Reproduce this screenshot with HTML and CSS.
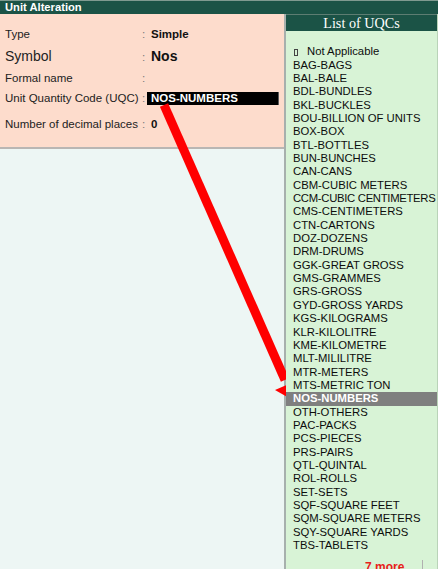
FILE: index.html
```html
<!DOCTYPE html>
<html lang="en">
<head>
<meta charset="utf-8">
<title>Unit Alteration</title>
<link rel="stylesheet" href="styles.css">
</head>
<body>
<div class="screen">
  <div class="topbar">Unit Alteration</div>
  <div class="content">
    <div class="main">
      <div class="panel">
        <div class="row r1"><span class="label">Type</span><span class="colon">:</span><span class="value">Simple</span></div>
        <div class="row r2"><span class="label big">Symbol</span><span class="colon">:</span><span class="value big">Nos</span></div>
        <div class="row r3"><span class="label">Formal name</span><span class="colon">:</span><span class="value"></span></div>
        <div class="row r4"><span class="label">Unit Quantity Code (UQC)</span><span class="colon">:</span><span class="value"><span class="field">NOS-NUMBERS</span></span></div>
        <div class="row r5"><span class="label">Number of decimal places</span><span class="colon">:</span><span class="value">0</span></div>
      </div>
    </div>
    <div class="side">
      <div class="side-title">List of UQCs</div>
      <ul class="uqc-list">
        <li><span class="na-box"></span>Not Applicable</li>
        <li>BAG-BAGS</li>
        <li>BAL-BALE</li>
        <li>BDL-BUNDLES</li>
        <li>BKL-BUCKLES</li>
        <li>BOU-BILLION OF UNITS</li>
        <li>BOX-BOX</li>
        <li>BTL-BOTTLES</li>
        <li>BUN-BUNCHES</li>
        <li>CAN-CANS</li>
        <li>CBM-CUBIC METERS</li>
        <li class="tight">CCM-CUBIC CENTIMETERS</li>
        <li>CMS-CENTIMETERS</li>
        <li>CTN-CARTONS</li>
        <li>DOZ-DOZENS</li>
        <li>DRM-DRUMS</li>
        <li>GGK-GREAT GROSS</li>
        <li>GMS-GRAMMES</li>
        <li>GRS-GROSS</li>
        <li>GYD-GROSS YARDS</li>
        <li>KGS-KILOGRAMS</li>
        <li>KLR-KILOLITRE</li>
        <li>KME-KILOMETRE</li>
        <li>MLT-MILILITRE</li>
        <li>MTR-METERS</li>
        <li>MTS-METRIC TON</li>
        <li class="selected">NOS-NUMBERS</li>
        <li>OTH-OTHERS</li>
        <li>PAC-PACKS</li>
        <li>PCS-PIECES</li>
        <li>PRS-PAIRS</li>
        <li>QTL-QUINTAL</li>
        <li>ROL-ROLLS</li>
        <li>SET-SETS</li>
        <li>SQF-SQUARE FEET</li>
        <li>SQM-SQUARE METERS</li>
        <li>SQY-SQUARE YARDS</li>
        <li>TBS-TABLETS</li>
      </ul>
      <div class="more"><span class="more-text">7 more ...</span><span class="more-bar"></span></div>
    </div>
  </div>
  <svg class="arrow" width="286" height="569" viewBox="0 0 286 569" xmlns="http://www.w3.org/2000/svg">
    <line x1="164" y1="105" x2="285" y2="380" stroke="#ff0000" stroke-width="9"/>
    <polygon points="275,390 298,380 295,401.5" fill="#ff0000"/>
  </svg>
</div>
</body>
</html>
```

FILE: styles.css
```css
* { box-sizing: border-box; }

html, body {
  margin: 0;
  padding: 0;
}

body {
  font-family: "Liberation Sans", Arial, sans-serif;
  color: #1a1a1a;
  background: #edf6f4;
}

.screen {
  position: relative;
  width: 438px;
  height: 569px;
  overflow: hidden;
  display: flex;
  flex-direction: column;
}

.topbar {
  height: 14px;
  border-top: 1px solid #7f9a90;
  background: #1b5346;
  color: #ffffff;
  font-weight: bold;
  font-size: 11.2px;
  line-height: 12px;
  padding-left: 5px;
  flex: none;
}

.content {
  flex: 1;
  display: flex;
  min-height: 0;
}

.main {
  width: 284px;
  flex: none;
  background: #edf6f4;
}

.panel {
  background: #fddccc;
  border-bottom: 2px solid #b9b6b3;
  padding: 12px 0 6px 5px;
}

.row {
  display: flex;
  align-items: baseline;
  font-size: 11.5px;
}

.r1 { height: 16px; line-height: 16px; }
.r2 { height: 28px; line-height: 28px; }
.r3 { height: 16px; line-height: 16px; }
.r4 { height: 18px; line-height: 18px; margin-top: 3px; }
.r5 { height: 34px; line-height: 34px; }

.label {
  width: 137px;
  flex: none;
  white-space: nowrap;
  color: #222222;
}

.colon {
  width: 9px;
  flex: none;
  color: #7a7a7a;
}

.value {
  font-weight: bold;
  color: #111111;
  white-space: nowrap;
}

.big { font-size: 14px; }

.field {
  display: inline-block;
  width: 132px;
  height: 13px;
  line-height: 13px;
  margin-left: -4px;
  padding-left: 4px;
  background: #000000;
  color: #ffffff;
  border-right: 1px solid #5a5a5a;
}

.side {
  flex: 1;
  display: flex;
  flex-direction: column;
  border-left: 2px solid #a7b0ad;
  background: #d8f3d6;
  border-right: 1px solid #b9d3b8;
}

.side-title {
  height: 17px;
  border-top: 1px solid #5d7d72;
  background: #1b5346;
  color: #ffffff;
  font-family: "Liberation Serif", "Times New Roman", serif;
  font-size: 14.2px;
  line-height: 16px;
  text-align: center;
  flex: none;
}

.uqc-list {
  list-style: none;
  margin: 0;
  padding: 14.3px 0 0 0;
  font-size: 11.3px;
  line-height: 13.35px;
  color: #0d0d0d;
}

.uqc-list li {
  padding-left: 7px;
  white-space: nowrap;
  height: 13.35px;
}

.uqc-list li.tight {
  letter-spacing: -0.3px;
}

.uqc-list li.selected {
  background: #7f7f7f;
  color: #ffffff;
  font-weight: bold;
}

.na-box {
  display: inline-block;
  width: 4px;
  height: 7px;
  border: 1px solid #444444;
  margin: 0 9px 0 1px;
  vertical-align: -1px;
}

.more {
  display: flex;
  align-items: flex-start;
  margin-top: 8px;
  padding-left: 79px;
  font-size: 12px;
  line-height: 14px;
}

.more-text {
  color: #e8211b;
  font-weight: bold;
}

.more-bar {
  width: 1px;
  height: 14px;
  background: #b0b0b0;
  margin-left: 4px;
}

.arrow {
  position: absolute;
  left: 0;
  top: 0;
  pointer-events: none;
}
```
